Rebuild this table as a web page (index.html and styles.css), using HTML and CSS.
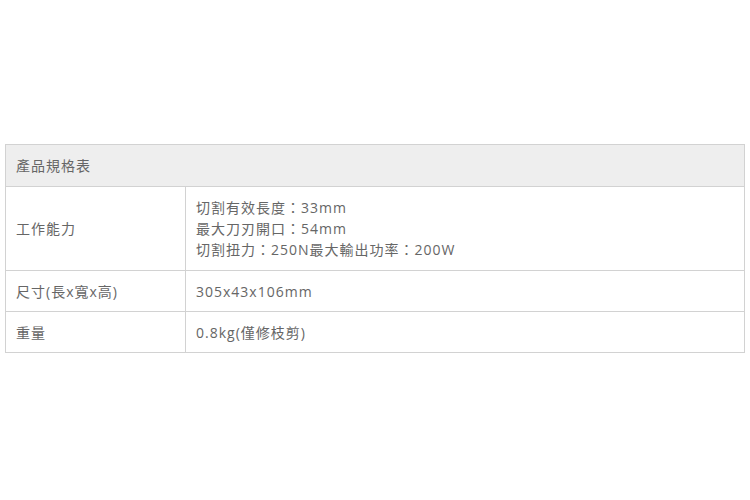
FILE: index.html
```html
<!DOCTYPE html>
<html lang="zh-Hant">
<head>
<meta charset="utf-8">
<link rel="stylesheet" href="styles.css">
</head>
<body>
<div class="page">
<table class="spec">
  <thead>
    <tr><th colspan="2">產品規格表</th></tr>
  </thead>
  <tbody>
    <tr>
      <td class="label">工作能力</td>
      <td>切割有效長度：33mm<br>最大刀刃開口：54mm<br>切割扭力：250N最大輸出功率：200W</td>
    </tr>
    <tr class="compact">
      <td class="label">尺寸(長x寬x高)</td>
      <td>305x43x106mm</td>
    </tr>
    <tr class="compact">
      <td class="label">重量</td>
      <td>0.8kg(僅修枝剪)</td>
    </tr>
  </tbody>
</table>
</div>
</body>
</html>
```

FILE: styles.css
```css
html, body {
  margin: 0;
  padding: 0;
  background: #fff;
}
.page {
  padding: 144px 5px 0 5px;
}
.spec {
  width: 740px;
  border-collapse: collapse;
  font-family: "Open Sans", "Noto Sans CJK TC", sans-serif;
  font-size: 14px;
  letter-spacing: 1px;
  line-height: 21px;
  color: #666;
}
.spec th, .spec td {
  border: 1px solid #d2d2d2;
  padding: 10px 10px 10px;
  height: 21px;
  text-align: left;
  vertical-align: middle;
  font-weight: normal;
}
.spec th {
  background: #eeeeee;
}
.spec tr.compact td {
  padding-bottom: 9px;
}
.spec td.label {
  width: 159px;
}
```
